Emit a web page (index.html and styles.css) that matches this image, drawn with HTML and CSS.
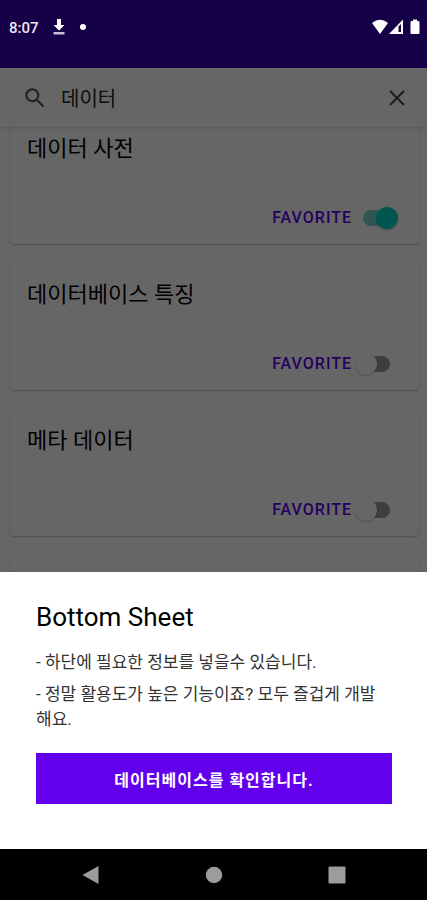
FILE: index.html
```html
<!DOCTYPE html>
<html lang="ko">
<head>
<meta charset="utf-8">
<meta name="viewport" content="width=device-width, initial-scale=1">
<title>Bottom Sheet</title>
<link rel="stylesheet" href="styles.css">
</head>
<body>
<div class="screen">
  <header class="status">
    <span class="clock">8:07</span>
    <svg class="download" width="12" height="16" viewBox="0 0 12 16"><path fill="#fff" d="M4 0h4v6h3.500L6 11.500 0.500 6H4z"/><path fill="#c9c1d8" d="M0.500 13h11v2.500H0.500z"/></svg>
    <span class="dot"></span>
    <span class="system">
      <svg width="18" height="16" viewBox="0 0 18 16"><path fill="#fff" d="M1 4Q9-2.500 17 4L9 15z"/></svg>
      <svg width="15" height="16" viewBox="0 0 15 16"><path fill="#fff" d="M0 15L14 0.500V15z"/><path fill="#160048" d="M9.500 7.500L12 5v8H9.500z"/></svg>
      <svg class="battery" width="10" height="16" viewBox="0 0 10 16"><path fill="#fff" d="M3 0.500h4v1.500h1.500q1 0 1 1V14q0 1-1 1h-7q-1 0-1-1V3q0-1 1-1H3z"/></svg>
    </span>
  </header>

  <main class="app">
    <form class="search" role="search">
      <svg width="26" height="26" viewBox="0 0 24 24"><path fill="#555" d="M15.500 14h-.79l-.28-.27A6.471 6.471 0 0 0 16 9.500 6.500 6.500 0 1 0 9.500 16c1.610 0 3.090-.59 4.230-1.570l.27.28v.79l5 4.990L20.490 19l-4.990-5zm-6 0C7.010 14 5 11.990 5 9.500S7.010 5 9.500 5 14 7.010 14 9.500 11.990 14 9.500 14z"/></svg>
      <input class="query" type="text" value="데이터" aria-label="검색">
      <button class="clear" type="button" aria-label="지우기"><svg width="24" height="24" viewBox="0 0 24 24"><path fill="none" stroke="#444" stroke-width="2" d="M5 5L19 19M19 5L5 19"/></svg></button>
    </form>
    <div class="list">
      <article class="card">
        <h2>데이터 사전</h2>
        <label class="favorite">FAVORITE <input type="checkbox" checked></label>
      </article>
      <article class="card">
        <h2>데이터베이스 특징</h2>
        <label class="favorite">FAVORITE <input type="checkbox"></label>
      </article>
      <article class="card">
        <h2>메타 데이터</h2>
        <label class="favorite">FAVORITE <input type="checkbox"></label>
      </article>
      <article class="card"></article>
    </div>
    <div class="scrim"></div>
  </main>

  <section class="sheet">
    <h1>Bottom Sheet</h1>
    <p>- 하단에 필요한 정보를 넣을수 있습니다.</p>
    <p>- 정말 활용도가 높은 기능이죠? 모두 즐겁게 개발해요.</p>
    <button class="confirm" type="button">데이터베이스를 확인합니다.</button>
  </section>

  <nav class="navbar">
    <button type="button" aria-label="뒤로"><svg width="18" height="18" viewBox="0 0 18 18"><path d="M0.500 9L16.500 0v18z"/></svg></button>
    <button type="button" aria-label="홈"><svg width="18" height="18" viewBox="0 0 18 18"><circle cx="9" cy="9" r="8.200"/></svg></button>
    <button type="button" aria-label="최근 앱"><svg width="18" height="18" viewBox="0 0 18 18"><rect x="0.500" y="0.500" width="17" height="17" rx="1"/></svg></button>
  </nav>
</div>
</body>
</html>
```
FILE: styles.css
```css
* {
  box-sizing: border-box;
}

body,
h1,
h2,
p {
  margin: 0;
}

body {
  font-family: Roboto, "Noto Sans CJK KR", sans-serif;
  color: #000;
}

button {
  padding: 0;
  border: 0;
  background: none;
  font: inherit;
}

svg {
  display: block;
  flex: none;
}

.screen {
  display: flex;
  flex-direction: column;
  height: 100vh;
  overflow: hidden;
}

.status {
  display: flex;
  align-items: flex-start;
  flex: none;
  height: 68px;
  padding: 19px 7px 0 9px;
  background: #160048;
  color: #ece8f4;
}

.clock {
  font-size: 15px;
  font-weight: 500;
  line-height: 18px;
}

.download {
  margin-left: 14px;
}

.dot {
  width: 6px;
  height: 6px;
  margin: 5px 0 0 15px;
  border-radius: 50%;
  background: #fff;
}

.system {
  display: flex;
  margin-left: auto;
}

.battery {
  margin-left: 6px;
}

.app {
  position: relative;
  flex: 1;
  min-height: 0;
  overflow: hidden;
  background: #fff;
}

.search {
  position: relative;
  display: flex;
  align-items: center;
  height: 59px;
  padding: 0 18px 0 22px;
  background: #fff;
  box-shadow: 0 1px 2px rgba(0, 0, 0, 0.15);
}

.query {
  flex: 1;
  min-width: 0;
  margin-left: 13px;
  padding: 0;
  border: 0;
  outline: 0;
  background: none;
  color: #222;
  font: inherit;
  font-size: 20px;
}

.list {
  display: grid;
  gap: 19px;
  margin-top: -10px;
  padding: 0 8px 0 10px;
}

.card {
  display: flex;
  flex-direction: column;
  justify-content: space-between;
  height: 127px;
  padding: 16px 21px 12px 17px;
  border-radius: 4px;
  box-shadow: 0 1px 2px rgba(0, 0, 0, 0.25);
}

.card h2 {
  font-size: 22px;
  font-weight: 400;
  line-height: 32px;
}

.favorite {
  display: flex;
  align-items: center;
  align-self: flex-end;
  gap: 3px;
  color: #6200ee;
  font-size: 16px;
  font-weight: 500;
  letter-spacing: 1px;
  line-height: 28px;
}

.favorite input {
  display: flex;
  align-items: center;
  width: 43px;
  height: 28px;
  margin: 0;
  appearance: none;
}

.favorite input::before {
  content: "";
  z-index: 1;
  width: 22px;
  height: 22px;
  border-radius: 50%;
  background: #fff;
  box-shadow: 0 1px 2px rgba(0, 0, 0, 0.25);
}

.favorite input::after {
  content: "";
  width: 21px;
  height: 16px;
  margin-left: -8px;
  border-radius: 8px;
  background: #9c9c9c;
}

.favorite input:checked {
  flex-direction: row-reverse;
}

.favorite input:checked::before {
  background: #03dac5;
}

.favorite input:checked::after {
  margin: 0 -8px 0 0;
  background: #75d8ce;
}

.scrim {
  position: absolute;
  z-index: 2;
  inset: 0;
  background: rgba(0, 0, 0, 0.6);
}

.sheet {
  flex: none;
  padding: 28px 35px 45px 36px;
  background: #fff;
}

.sheet h1 {
  margin-bottom: 16px;
  font-size: 26px;
  font-weight: 400;
  line-height: 34px;
}

.sheet p {
  margin-bottom: 7px;
  padding-right: 8px;
  color: #333;
  font-size: 17px;
  line-height: 25px;
  word-break: break-all;
}

.confirm {
  display: block;
  width: 100%;
  height: 51px;
  margin-top: 21px;
  background: #6200ee;
  color: #fff;
  font-size: 16px;
  font-weight: 700;
  letter-spacing: 1px;
}

.navbar {
  display: flex;
  align-items: center;
  justify-content: space-around;
  flex: none;
  height: 51px;
  padding: 0 29px;
  background: #000;
}

.navbar svg {
  fill: #9c9c9c;
}
```
